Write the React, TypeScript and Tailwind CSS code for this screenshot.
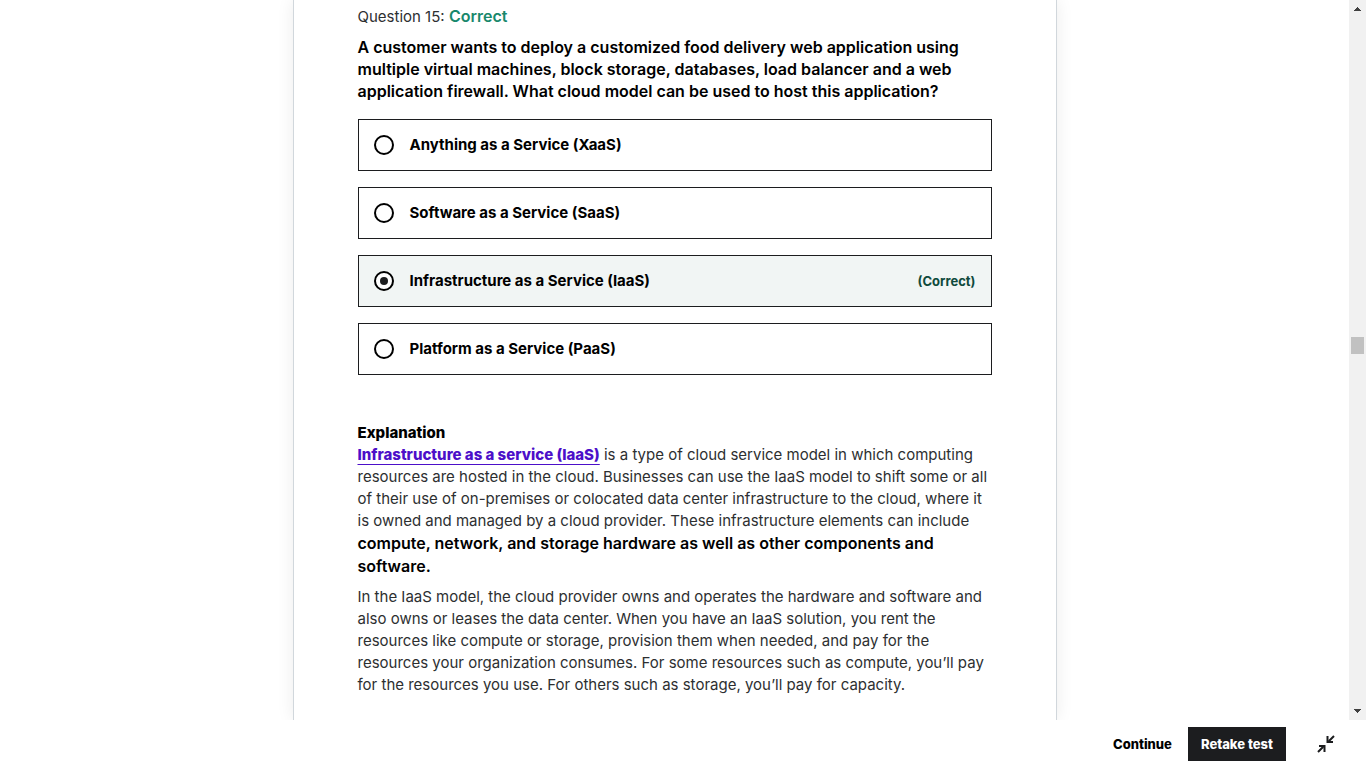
const options = [
  { id: 'xaas', label: 'Anything as a Service (XaaS)' },
  { id: 'saas', label: 'Software as a Service (SaaS)' },
  { id: 'iaas', label: 'Infrastructure as a Service (IaaS)', correct: true },
  { id: 'paas', label: 'Platform as a Service (PaaS)' },
];

function Option({ id, label, correct = false }: { id: string; label: string; correct?: boolean }) {
  return (
    <label
      htmlFor={id}
      className={`flex h-[52px] cursor-pointer items-center border border-[#1c1d1f] px-[15px] ${correct ? 'bg-[#f1f5f4]' : 'bg-white'}`}
    >
      <input
        id={id}
        type="radio"
        name="answer"
        defaultChecked={correct}
        className="grid size-5 shrink-0 appearance-none place-items-center rounded-full border-2 border-black bg-white before:size-2 before:rounded-full before:content-[''] checked:before:bg-[#1c1d1f]"
      />
      <span className="ml-4 flex-1 text-[15px] leading-[22px] font-bold">{label}</span>
      {correct && <span className="text-[13px] leading-5 font-bold text-[#0f4a3c]">(Correct)</span>}
    </label>
  );
}

function ScrollRail() {
  return (
    <div aria-hidden="true" className="flex w-[17px] shrink-0 flex-col items-center bg-[#f1f1f1]">
      <svg width="17" height="17" viewBox="0 0 17 17" shapeRendering="crispEdges" fill="#404040">
        <path d="M8 7h1v1h1v1h1v1h1v1H5v-1h1V9h1V8h1z" />
      </svg>
      <div className="flex w-full flex-1 flex-col items-center">
        <div className="grow-[320]" />
        <div className="h-[17px] w-[13px] bg-[#c1c1c1]" />
        <div className="grow-[349]" />
      </div>
      <svg width="17" height="17" viewBox="0 0 17 17" shapeRendering="crispEdges" fill="#404040">
        <path d="M5 6h7v1h-1v1h-1v1H9v1H8V9H7V8H6V7H5z" />
      </svg>
    </div>
  );
}

export default function App() {
  return (
    <div className="flex h-screen flex-col bg-white font-['Inter','Liberation_Sans',sans-serif] text-[15px] leading-[22px] text-black">
      <div className="flex min-h-0 flex-1">
        <main className="min-w-0 flex-1 overflow-hidden">
          <article className="mx-auto min-h-full max-w-[764px] border-x border-[#d1d7dc] px-16 pt-[5px] shadow-[0_0_16px_rgba(0,0,0,0.08)]">
            <h2 className="font-normal text-[#2d2f31]">
              Question 15: <span className="text-[16px] font-semibold text-[#19886c]">Correct</span>
            </h2>
            <p className="mt-2 text-[16px] leading-[22px] font-semibold">
              A customer wants to deploy a customized food delivery web application using
              <br />
              multiple virtual machines, block storage, databases, load balancer and a web
              <br />
              application firewall. What cloud model can be used to host this application?
            </p>
            <form className="mt-[17px] flex flex-col gap-4">
              {options.map((o) => (
                <Option key={o.id} {...o} />
              ))}
            </form>
            <section className="mt-[47px] font-normal text-[#2d2f31]">
              <h3 className="font-extrabold text-black">Explanation</h3>
              <p>
                <a
                  href="#iaas"
                  className="font-extrabold text-[#4c0fc9] underline decoration-1 underline-offset-4 [text-decoration-skip-ink:none]"
                >
                  Infrastructure as a service (IaaS)
                </a>{' '}
                is a type of cloud service model in which computing
                <br />
                resources are hosted in the cloud. Businesses can use the IaaS model to shift some or all
                <br />
                of their use of on-premises or colocated data center infrastructure to the cloud, where it
                <br />
                is owned and managed by a cloud provider. These infrastructure elements can include
                <br />
                <strong className="text-[16px] font-semibold text-black">
                  compute, network, and storage hardware as well as other components and
                  <br />
                  software.
                </strong>
              </p>
              <p className="mt-2">
                In the IaaS model, the cloud provider owns and operates the hardware and software and
                <br />
                also owns or leases the data center. When you have an IaaS solution, you rent the
                <br />
                resources like compute or storage, provision them when needed, and pay for the
                <br />
                resources your organization consumes. For some resources such as compute, you’ll pay
                <br />
                for the resources you use. For others such as storage, you’ll pay for capacity.
              </p>
            </section>
          </article>
        </main>
        <ScrollRail />
      </div>
      <footer className="flex h-12 shrink-0 items-center justify-end pr-[31px] text-[13px] font-extrabold">
        <button type="button" className="px-4">Continue</button>
        <button type="button" className="h-[34px] bg-[#1c1d1f] px-[13px] text-white">Retake test</button>
        <button type="button" aria-label="Exit full screen" className="ml-[31px]">
          <svg width="18" height="18" viewBox="0 0 18 18" fill="none" stroke="#1c1d1f" strokeWidth="2">
            <path d="M17 1l-5 5M10.500 1v6H16M1 17l5-5M2 11H7.500V17" />
          </svg>
        </button>
      </footer>
    </div>
  );
}
